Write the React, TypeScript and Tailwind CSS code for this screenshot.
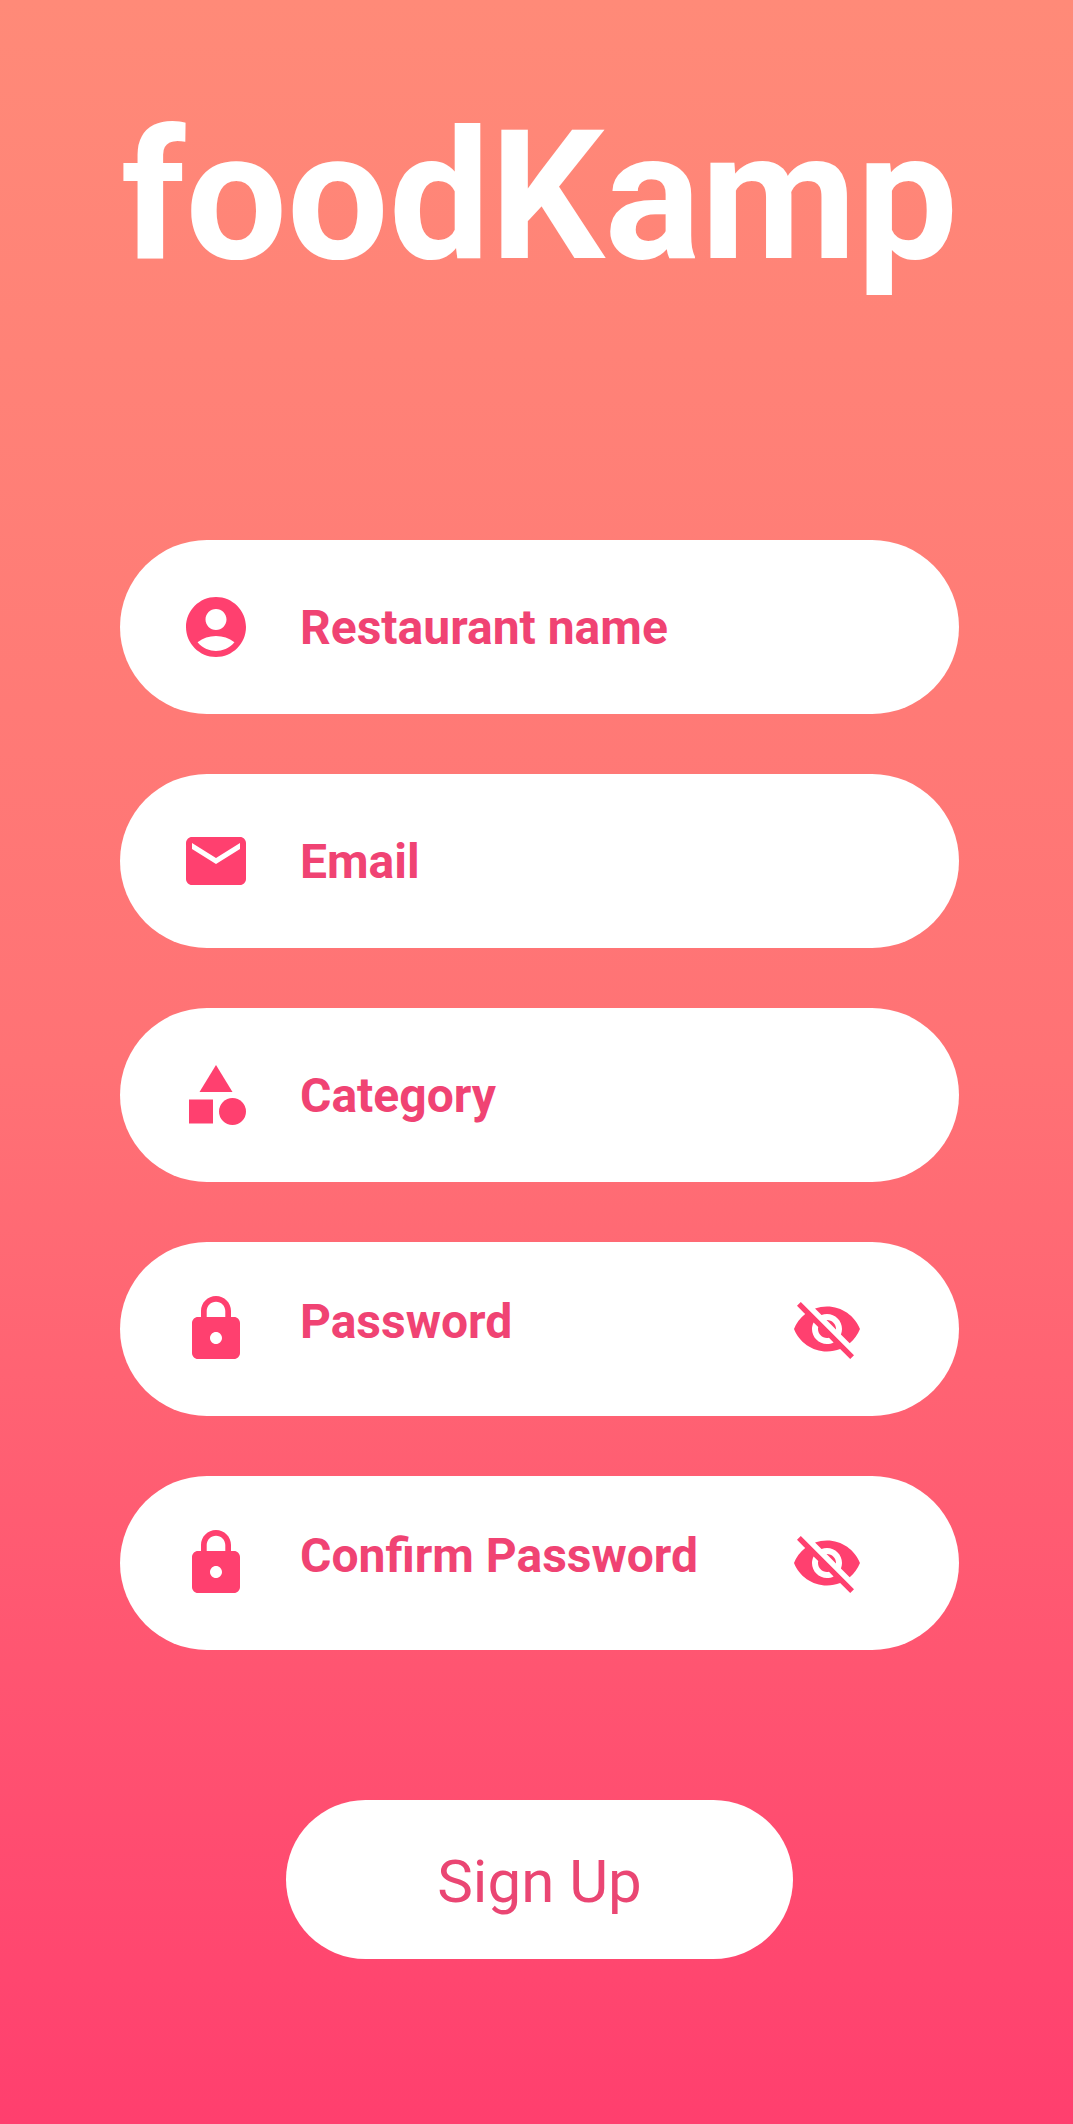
import React, { useState } from "react";
import { MdAccountCircle, MdEmail, MdCategory, MdLock, MdVisibilityOff, MdVisibility } from "react-icons/md";
import type { IconType } from "react-icons";

type FieldProps = { id: string; label: string; icon: IconType; type?: string };

const shell =
  "flex h-[174px] items-center rounded-full bg-white pl-[60px] pr-[96px] text-[#ff406f]";

function Field({ id, label, icon: Icon, type = "text" }: FieldProps) {
  return (
    <div className={shell}>
      <Icon className="size-[72px] shrink-0" aria-hidden="true" />
      <input
        id={id}
        type={type}
        aria-label={label}
        placeholder={label}
        className="mt-0.5 ml-12 h-16 min-w-0 flex-1 bg-transparent text-[48px] font-bold outline-none placeholder:text-[#f04373] placeholder:opacity-100"
      />
    </div>
  );
}

function PasswordField({ id, label }: { id: string; label: string }) {
  const [visible, setVisible] = useState(false);
  const Eye = visible ? MdVisibility : MdVisibilityOff;
  return (
    <div className={shell}>
      <MdLock className="size-[72px] shrink-0" aria-hidden="true" />
      <input
        id={id}
        type={visible ? "text" : "password"}
        aria-label={label}
        placeholder={label}
        className="mb-3.5 ml-12 h-16 min-w-0 flex-1 bg-transparent text-[48px] font-bold outline-none placeholder:text-[#f04373] placeholder:opacity-100"
      />
      <button
        type="button"
        aria-label={visible ? "Hide password" : "Show password"}
        onClick={() => setVisible(!visible)}
      >
        <Eye className="size-[72px]" aria-hidden="true" />
      </button>
    </div>
  );
}

export default function App() {
  return (
    <main className="flex min-h-screen flex-col items-center bg-linear-to-b/srgb from-[#ff8a78] via-[#ff7275] to-[#ff3f6e] pt-[84px] pr-[114px] pl-[120px] font-['Roboto',sans-serif]">
      <h1 className="text-[180px] leading-[226px] font-bold text-white">foodKamp</h1>
      <form className="mt-[230px] flex w-full flex-col" onSubmit={(e) => e.preventDefault()}>
        <div className="flex flex-col gap-[60px]">
          <Field id="name" label="Restaurant name" icon={MdAccountCircle} />
          <Field id="email" label="Email" icon={MdEmail} type="email" />
          <Field id="category" label="Category" icon={MdCategory} />
          <PasswordField id="password" label="Password" />
          <PasswordField id="confirm" label="Confirm Password" />
        </div>
        <button
          type="submit"
          className="mt-[150px] self-center rounded-full bg-white px-[151px] pt-[46px] pb-[41px] text-[60px] leading-[72px] text-[#ea4673]"
        >
          Sign Up
        </button>
      </form>
    </main>
  );
}
